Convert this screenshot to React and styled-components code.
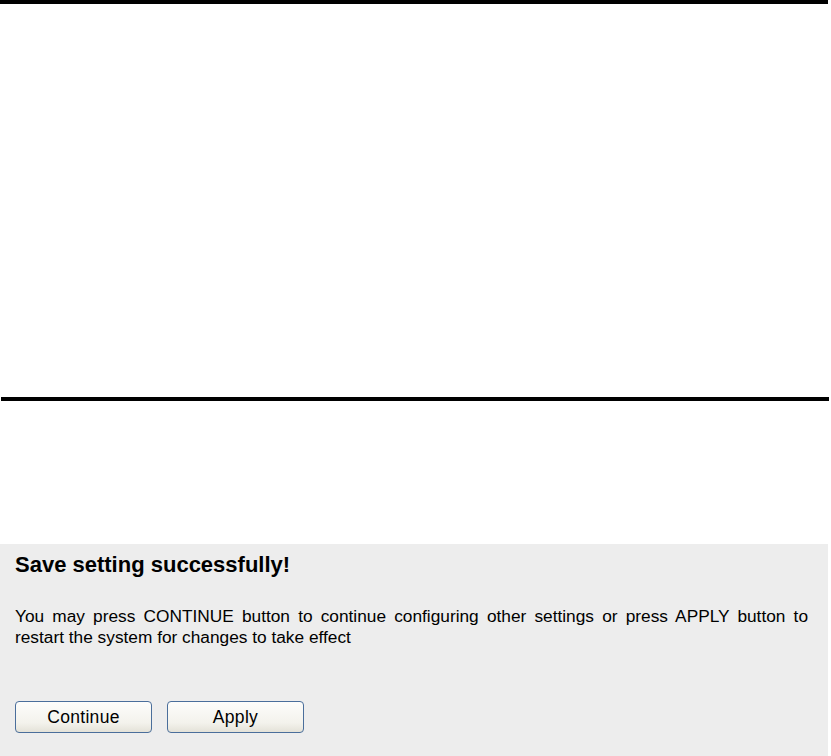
import React from "react";
import styled, { createGlobalStyle } from "styled-components";

const GlobalStyle = createGlobalStyle`
  html, body {
    margin: 0;
    padding: 0;
    background: #ffffff;
  }
  body {
    font-family: "Liberation Sans", Arial, sans-serif;
    color: #000000;
  }
`;

const Page = styled.div`
  width: 831px;
  height: 756px;
  overflow: hidden;
  display: flex;
  flex-direction: column;
`;

const Rule = styled.div`
  width: 828px;
  height: 4px;
  margin-left: ${(p) => (p.inset ? "1px" : "0")};
  background: #000000;
  flex-shrink: 0;
`;

const Blank = styled.div`
  height: ${(p) => p.h}px;
  flex-shrink: 0;
`;

const Panel = styled.section`
  width: 828px;
  flex: 1;
  background: #ededed;
  padding: 8px 15px 0;
  box-sizing: border-box;
`;

const Title = styled.h1`
  margin: 0;
  font-size: 22px;
  font-weight: bold;
  line-height: 25px;
`;

const Message = styled.p`
  margin: 29px 0 0;
  font-size: 17.3px;
  line-height: 21px;
  width: 793px;
  text-align: justify;
`;

const ButtonRow = styled.div`
  display: flex;
  gap: 15px;
  margin-top: 53px;
`;

const Button = styled.button`
  width: 137px;
  height: 32px;
  border: 1px solid #4a6e9b;
  border-radius: 4px;
  background: linear-gradient(#fdfdfb, #f3f2ec 70%, #e4e2d8);
  font-family: "Liberation Sans", Arial, sans-serif;
  font-size: 17.5px;
  letter-spacing: 0.3px;
  color: #000000;
  padding: 0;
  cursor: pointer;
`;

export default function App() {
  return (
    <>
      <GlobalStyle />
      <Page>
        <Rule />
        <Blank h={393} />
        <Rule inset />
        <Blank h={143} />
        <Panel>
          <Title>Save setting successfully!</Title>
          <Message>
            You may press CONTINUE button to continue configuring other settings
            or press APPLY button to restart the system for changes to take
            effect
          </Message>
          <ButtonRow>
            <Button>Continue</Button>
            <Button>Apply</Button>
          </ButtonRow>
        </Panel>
      </Page>
    </>
  );
}
